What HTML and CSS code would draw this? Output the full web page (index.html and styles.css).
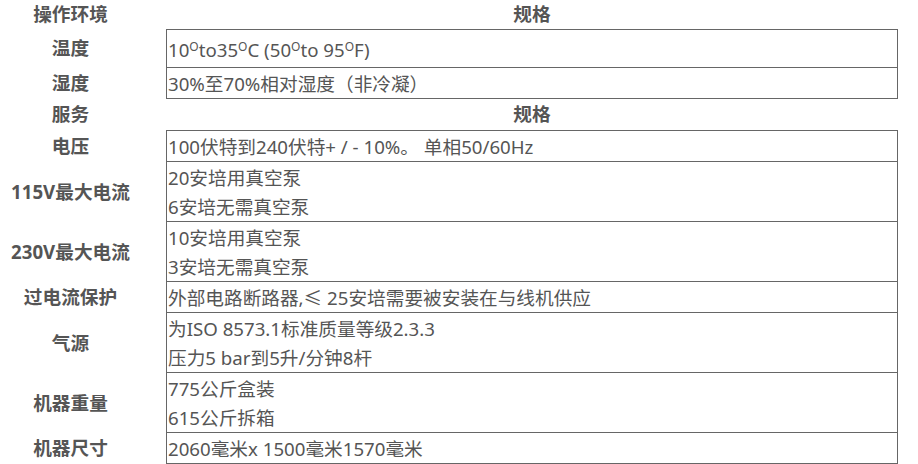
FILE: index.html
```html
<!DOCTYPE html>
<html lang="zh">
<head>
<meta charset="utf-8">
<link rel="stylesheet" href="styles.css">
</head>
<body>
<div class="spec">
  <div class="row head head-first">
    <div class="label">操作环境</div>
    <div class="label">规格</div>
  </div>
  <div class="row">
    <div class="label">温度</div>
    <div class="val first tall">10<sup>O</sup>to35<sup>O</sup>C (50<sup>O</sup>to 95<sup>O</sup>F)</div>
  </div>
  <div class="row">
    <div class="label">湿度</div>
    <div class="val">30%至70%相对湿度（非冷凝）</div>
  </div>
  <div class="row head head-second">
    <div class="label">服务</div>
    <div class="label">规格</div>
  </div>
  <div class="row">
    <div class="label">电压</div>
    <div class="val first">100伏特到240伏特+ / - 10%。 单相50/60Hz</div>
  </div>
  <div class="row">
    <div class="label">115V最大电流</div>
    <div class="val">20安培用真空泵<br>6安培无需真空泵</div>
  </div>
  <div class="row">
    <div class="label">230V最大电流</div>
    <div class="val">10安培用真空泵<br>3安培无需真空泵</div>
  </div>
  <div class="row">
    <div class="label">过电流保护</div>
    <div class="val">外部电路断路器,≤ 25安培需要被安装在与线机供应</div>
  </div>
  <div class="row">
    <div class="label">气源</div>
    <div class="val">为ISO 8573.1标准质量等级2.3.3<br>压力5 bar到5升/分钟8杆</div>
  </div>
  <div class="row">
    <div class="label">机器重量</div>
    <div class="val">775公斤盒装<br>615公斤拆箱</div>
  </div>
  <div class="row">
    <div class="label">机器尺寸</div>
    <div class="val">2060毫米x 1500毫米1570毫米</div>
  </div>
</div>
</body>
</html>
```
FILE: styles.css
```css
html, body {
  margin: 0;
  padding: 0;
  background: #fff;
}
body {
  font-family: "Noto Sans", "Noto Sans CJK SC", sans-serif;
  font-size: 18.67px;
  color: #555;
}
.spec {
  display: flex;
  flex-direction: column;
}
.row {
  display: grid;
  grid-template-columns: 141px 732px;
  column-gap: 25px;
}
.label {
  font-weight: bold;
  display: flex;
  align-items: center;
  justify-content: center;
  white-space: nowrap;
  line-height: 1;
}
.head-first {
  height: 29px;
}
.head-second {
  height: 31px;
}
.val {
  border: 1px solid #666;
  border-top: none;
  padding: 0.5px 1px;
  line-height: 29px;
  white-space: nowrap;
  overflow: hidden;
}
.val.first {
  border-top: 1px solid #666;
}
.val.tall {
  padding: 5px 1px 3px;
}
sup {
  font-size: 12px;
  line-height: 0;
  vertical-align: 6px;
}
```
